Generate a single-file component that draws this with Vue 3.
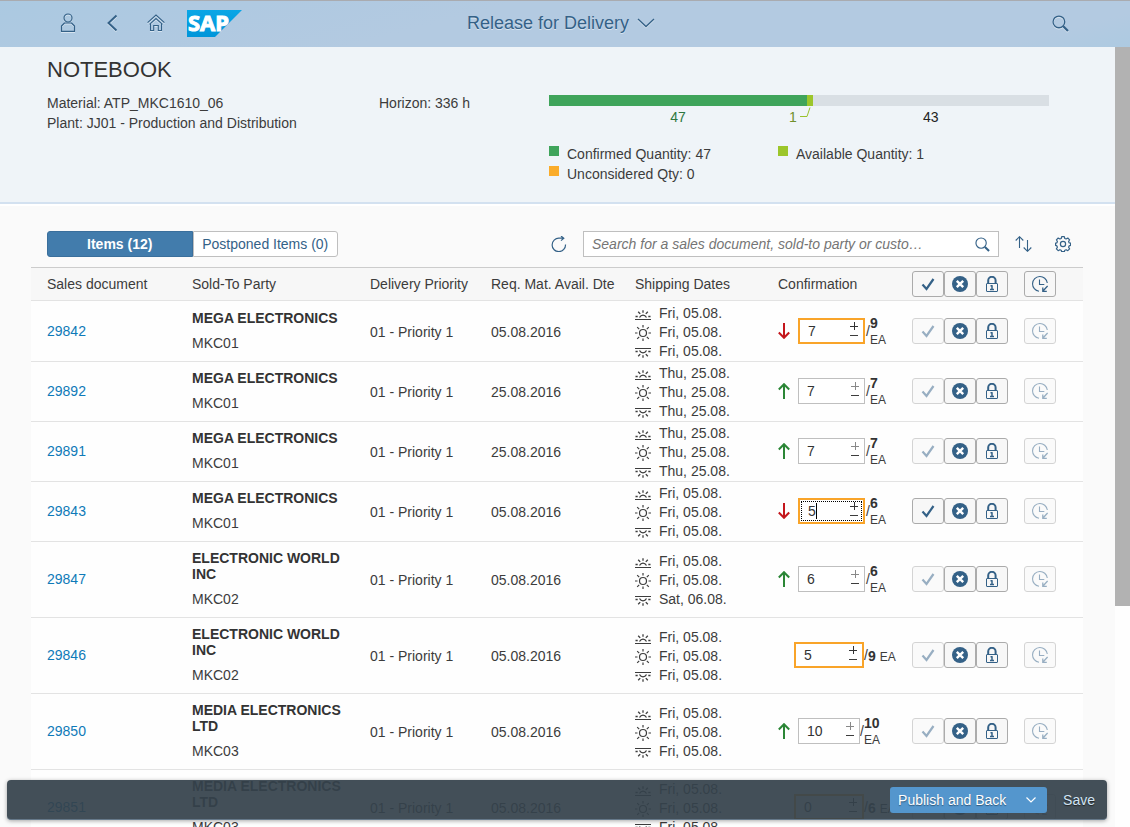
<script setup>
import { ref } from 'vue'

const query = ref('')
const tab = ref('items')

const segments = [
  { key: 'confirmed', value: 47 },
  { key: 'available', value: 1 },
  { key: 'open', value: 43 }
]

const legend = [
  { key: 'confirmed', label: 'Confirmed Quantity: 47' },
  { key: 'available', label: 'Available Quantity: 1' },
  { key: 'unconsidered', label: 'Unconsidered Qty: 0' }
]

const dateIcons = ['sunrise', 'sun', 'sunset']

const rows = ref([
  { doc: '29842', party: 'MEGA ELECTRONICS', code: 'MKC01', date: '05.08.2016', dates: ['Fri, 05.08.', 'Fri, 05.08.', 'Fri, 05.08.'], trend: 'down', qty: '7', total: '9', warn: true },
  { doc: '29892', party: 'MEGA ELECTRONICS', code: 'MKC01', date: '25.08.2016', dates: ['Thu, 25.08.', 'Thu, 25.08.', 'Thu, 25.08.'], trend: 'up', qty: '7', total: '7' },
  { doc: '29891', party: 'MEGA ELECTRONICS', code: 'MKC01', date: '25.08.2016', dates: ['Thu, 25.08.', 'Thu, 25.08.', 'Thu, 25.08.'], trend: 'up', qty: '7', total: '7' },
  { doc: '29843', party: 'MEGA ELECTRONICS', code: 'MKC01', date: '05.08.2016', dates: ['Fri, 05.08.', 'Fri, 05.08.', 'Fri, 05.08.'], trend: 'down', qty: '5', total: '6', warn: true, editing: true },
  { doc: '29847', party: 'ELECTRONIC WORLD INC', code: 'MKC02', date: '05.08.2016', dates: ['Fri, 05.08.', 'Fri, 05.08.', 'Sat, 06.08.'], trend: 'up', qty: '6', total: '6' },
  { doc: '29846', party: 'ELECTRONIC WORLD INC', code: 'MKC02', date: '05.08.2016', dates: ['Fri, 05.08.', 'Fri, 05.08.', 'Fri, 05.08.'], trend: '', qty: '5', total: '9', warn: true },
  { doc: '29850', party: 'MEDIA ELECTRONICS LTD', code: 'MKC03', date: '05.08.2016', dates: ['Fri, 05.08.', 'Fri, 05.08.', 'Fri, 05.08.'], trend: 'up', qty: '10', total: '10' },
  { doc: '29851', party: 'MEDIA ELECTRONICS LTD', code: 'MKC03', date: '05.08.2016', dates: ['Fri, 05.08.', 'Fri, 05.08.', 'Fri, 05.08.'], trend: '', qty: '0', total: '6', warn: true }
])

function step(row, delta) {
  row.qty = String(Math.max(0, Number(row.qty) + delta))
}
</script>

<template>
  <div class="app">
    <svg class="defs" aria-hidden="true">
      <defs>
        <linearGradient id="brand" x1="0" y1="0" x2="0" y2="1">
          <stop offset="0" stop-color="#0aa6e6" /><stop offset="1" stop-color="#0095d9" />
        </linearGradient>
        <symbol id="check" viewBox="0 0 16 16"><path d="M2.5 8.5 6.5 13 13.5 3" fill="none" stroke="currentColor" stroke-width="2.2" /></symbol>
        <symbol id="reject" viewBox="0 0 16 16"><circle cx="8" cy="8" r="8" fill="currentColor" /><path d="M4.8 4.8 11.2 11.2M11.2 4.8 4.8 11.2" stroke="#fff" stroke-width="2.4" /></symbol>
        <symbol id="lock" viewBox="0 0 16 16"><path d="M4.2 7.500V4.500a3.700 3.700 0 0 1 7.400 0V7.500" fill="none" stroke="currentColor" stroke-width="2" /><rect x="2.500" y="7.500" width="11" height="8" rx=".5" fill="none" stroke="currentColor" /><path d="M6.500 9.800h1.800M6 13.500h4M8 9.300v4.200" fill="none" stroke="currentColor" stroke-width="1.500" /></symbol>
        <symbol id="postpone" viewBox="0 0 16 16"><path d="M7 15.300A7.400 7.400 0 1 1 15.300 7M7.500 3.600V8.500h4.800" fill="none" stroke="currentColor" stroke-width="1.100" /><path d="M15.600 10 11 15M10.800 11.500v3.900h4" fill="none" stroke="currentColor" stroke-width="1.300" /></symbol>
        <symbol id="sunrise" viewBox="0 0 16 16"><path d="M0 13.500h16" stroke="currentColor" /><path d="M4.500 11.500c1-1.800 2.200-2.300 3.500-2.300s2.500.5 3.500 2.300M8 4.200v2.600M3.200 5.700 5.200 7.900M12.800 5.700 10.800 7.900M.5 10.500h2.200M13.300 10.500h2.200" fill="none" stroke="currentColor" stroke-width="1.300" /></symbol>
        <symbol id="sun" viewBox="0 0 16 16"><circle cx="8" cy="8" r="3.500" fill="none" stroke="currentColor" stroke-width="1.200" /><path d="M8 0v2.500M8 13.500V16M0 8h2.500M13.500 8H16M2.200 2.200 4.200 4.200M11.800 11.800l2 2M2.200 13.800l2-2M11.800 4.200l2-2" stroke="currentColor" stroke-width="1.200" /></symbol>
        <symbol id="sunset" viewBox="0 0 16 16"><path d="M0 4.500h16" stroke="currentColor" /><path d="M4.500 6.500c1 1.800 2.200 2.300 3.500 2.300s2.500-.5 3.500-2.300M8 11.200v2.600M3.200 12.300 5.200 10.100M12.800 12.300 10.800 10.100M.5 7.500h2.200M13.300 7.500h2.200" fill="none" stroke="currentColor" stroke-width="1.300" /></symbol>
        <symbol id="search" viewBox="0 0 16 16"><circle cx="6.500" cy="6.500" r="5.500" fill="none" stroke="currentColor" stroke-width="1.200" /><path d="M10.600 10.600 15 15" stroke="currentColor" stroke-width="2.100" /></symbol>
        <symbol id="down" viewBox="0 0 12 16"><path d="M6 0v14.500M.8 9.500 6 14.800 11.200 9.500" fill="none" stroke="currentColor" stroke-width="2" /></symbol>
        <symbol id="up" viewBox="0 0 12 16"><path d="M6 16V1.500M.8 6.500 6 1.200 11.200 6.500" fill="none" stroke="currentColor" stroke-width="2" /></symbol>
      </defs>
    </svg>

    <header class="shell">
      <div class="shell-left">
        <button class="shell-btn" aria-label="User">
          <svg width="16" height="20" viewBox="0 0 16 20" fill="none" stroke="currentColor" stroke-width="1.200"><circle cx="8" cy="5" r="4" /><path d="M4.500 10h7L14.500 13v5.400h-13V13z" stroke-linejoin="round" /></svg>
        </button>
        <button class="shell-btn" aria-label="Back">
          <svg width="12" height="18" viewBox="0 0 12 18" fill="none" stroke="currentColor" stroke-width="1.900"><path d="M10.500 1.500 2.500 9 10.500 16.500" /></svg>
        </button>
        <button class="shell-btn" aria-label="Home">
          <svg width="18" height="18" viewBox="0 0 18 18" fill="none" stroke="currentColor" stroke-width="1.100"><path d="M.6 8.700 9 1l8.400 7.700M2.600 10.400 9 4.500l6.400 5.900M3.500 10v6.500h3.200v-5h4.600v5h3.200V10" /></svg>
        </button>
        <svg class="brand" width="55" height="27" viewBox="0 0 55 27" role="img" aria-label="SAP">
          <path d="M0 0h55L28 27H0z" fill="url(#brand)" />
          <text x="1" y="21" class="brand-text">SAP</text>
        </svg>
      </div>
      <button class="app-title">
        <span>Release for Delivery</span>
        <svg width="18" height="10" viewBox="0 0 18 10" fill="none" stroke="currentColor" stroke-width="1.300"><path d="M1 1l8 7.500L17 1" /></svg>
      </button>
      <button class="shell-btn" aria-label="Search"><svg width="17" height="17"><use href="#search" /></svg></button>
    </header>

    <div class="viewport">
      <main class="page">
        <section class="object">
          <h1>NOTEBOOK</h1>
          <div class="facts">
            <div>
              <p>Material: ATP_MKC1610_06</p>
              <p>Plant: JJ01 - Production and Distribution</p>
            </div>
            <p>Horizon: 336 h</p>
            <div class="chart">
              <div class="bar">
                <span v-for="s in segments" :key="s.key" :class="s.key" :style="{ flexGrow: s.value }"></span>
              </div>
              <div class="bar-labels">
                <span v-for="s in segments" :key="s.key" :class="'t-' + s.key" :style="{ flexGrow: s.value }">
                  <span v-if="s.key === 'available'" class="callout">
                    {{ s.value }}
                    <svg width="11" height="12" viewBox="0 0 11 12" fill="none" stroke="#9ac22c"><path d="M0 9.500h7L10 .5" /></svg>
                  </span>
                  <template v-else>{{ s.value }}</template>
                </span>
              </div>
              <ul class="legend">
                <li v-for="l in legend" :key="l.key"><i :class="l.key"></i>{{ l.label }}</li>
              </ul>
            </div>
          </div>
        </section>

        <div class="toolbar">
          <div class="tabs">
            <button :class="{ on: tab === 'items' }" @click="tab = 'items'">Items (12)</button>
            <button :class="{ on: tab === 'postponed' }" @click="tab = 'postponed'">Postponed Items (0)</button>
          </div>
          <div class="tools">
            <button class="tool" aria-label="Refresh">
              <svg width="16" height="16" viewBox="0 0 16 16" fill="none" stroke="currentColor" stroke-width="1.200"><path d="M14.500 8.500A6.700 6.700 0 1 1 8 2.200h4.500M10 0l2.800 2.200L10 4.600" /></svg>
            </button>
            <div class="search">
              <input v-model="query" type="text" aria-label="Search items" placeholder="Search for a sales document, sold-to party or custo…" />
              <button aria-label="Start search"><svg width="15" height="15"><use href="#search" /></svg></button>
            </div>
            <button class="tool" aria-label="Sort">
              <svg width="17" height="16" viewBox="0 0 17 16" fill="none" stroke="currentColor" stroke-width="1.100"><path d="M4.500 12V.8M.7 4.500l3.800-3.800 3.800 3.800M12.500 4v11.200M8.700 11.500l3.800 3.800 3.800-3.800" /></svg>
            </button>
            <button class="tool" aria-label="Settings">
              <svg width="16" height="16" viewBox="0 0 16 16" fill="none" stroke="currentColor" stroke-width="1.200" stroke-linejoin="round"><circle cx="8" cy="8" r="2.600" /><path d="M6.700.6h2.600l.5 1.900 1.300.5 1.700-1 1.800 1.800-1 1.700.5 1.300 1.500.2v2.400l-1.500.5-.5 1.300 1 1.700-1.800 1.800-1.700-1-1.300.5-.5 1.500H6.700l-.5-1.500-1.300-.5-1.700 1-1.800-1.800 1-1.700-.5-1.300-1.300-.5V7l1.300-.2.500-1.300-1-1.700L3.200 2l1.700 1 1.300-.5z" /></svg>
            </button>
          </div>
        </div>

        <table>
          <colgroup><col class="c1" /><col class="c2" /><col class="c3" /><col class="c4" /><col class="c5" /><col class="c6" /><col class="c7" /></colgroup>
          <thead>
            <tr>
              <th>Sales document</th>
              <th>Sold-To Party</th>
              <th>Delivery Priority</th>
              <th>Req. Mat. Avail. Dte</th>
              <th>Shipping Dates</th>
              <th>Confirmation</th>
              <th>
                <div class="actions">
                  <button aria-label="Confirm all"><svg><use href="#check" /></svg></button>
                  <button aria-label="Reject all"><svg><use href="#reject" /></svg></button>
                  <button aria-label="Lock all"><svg><use href="#lock" /></svg></button>
                  <button class="later" aria-label="Postpone all"><svg><use href="#postpone" /></svg></button>
                </div>
              </th>
            </tr>
          </thead>
          <tbody>
            <tr v-for="row in rows" :key="row.doc">
              <td class="raised"><a href="#">{{ row.doc }}</a></td>
              <td><strong>{{ row.party }}</strong><span class="code">{{ row.code }}</span></td>
              <td>01 - Priority 1</td>
              <td>{{ row.date }}</td>
              <td class="dates">
                <div v-for="(d, i) in row.dates" :key="i"><svg width="16" height="16"><use :href="'#' + dateIcons[i]" /></svg>{{ d }}</div>
              </td>
              <td class="raised">
                <div class="confirm" :class="{ plain: !row.trend, wide: row.total.length > 1 }">
                  <svg v-if="row.trend" class="trend" :class="row.trend"><use :href="'#' + row.trend" /></svg>
                  <div class="stepper" :class="{ warn: row.warn, editing: row.editing }">
                    <input v-model="row.qty" type="text" :aria-label="'Confirmed quantity ' + row.doc" />
                    <span v-if="row.editing" class="caret"></span>
                    <span class="steps">
                      <button aria-label="Increase" class="plus" @click="step(row, 1)"><svg width="8" height="8" viewBox="0 0 8 8"><path d="M0 4.500h8M4.500 0v8" stroke="currentColor" /></svg></button>
                      <button aria-label="Decrease" @click="step(row, -1)"><svg width="8" height="3" viewBox="0 0 8 3"><path d="M0 1.500h8" stroke="currentColor" /></svg></button>
                    </span>
                  </div>
                  <span class="slash">/</span>
                  <span class="total"><b>{{ row.total }}</b><small>EA</small></span>
                </div>
              </td>
              <td class="raised">
                <div class="actions">
                  <button :disabled="!row.editing" aria-label="Confirm"><svg><use href="#check" /></svg></button>
                  <button aria-label="Reject"><svg><use href="#reject" /></svg></button>
                  <button aria-label="Lock"><svg><use href="#lock" /></svg></button>
                  <button class="later" disabled aria-label="Postpone"><svg><use href="#postpone" /></svg></button>
                </div>
              </td>
            </tr>
          </tbody>
        </table>
      </main>
      <div class="scrollbar"><div class="thumb"></div></div>
    </div>

    <footer class="footer">
      <button class="publish">
        Publish and Back
        <svg width="10" height="6" viewBox="0 0 10 6" fill="none" stroke="currentColor" stroke-width="1.200"><path d="M.5.5 5 5 9.500.5" /></svg>
      </button>
      <button class="save">Save</button>
    </footer>
  </div>
</template>

<style>
body { margin: 0; }
</style>

<style scoped>
.app {
  position: relative;
  height: 100vh;
  display: flex;
  flex-direction: column;
  overflow: hidden;
  background: #fefefe;
  color: #3c3c3c;
  font: 14px/20px "Liberation Sans", Arial, sans-serif;
}
.app * { box-sizing: border-box; }
.defs { position: absolute; width: 0; height: 0; }
button { font: inherit; color: inherit; padding: 0; margin: 0; border: 0; background: none; cursor: pointer; }
svg { display: block; flex: none; }
h1, p, ul { margin: 0; padding: 0; list-style: none; font-weight: normal; }

.shell {
  flex: none;
  height: 47px;
  display: grid;
  grid-template-columns: 1fr auto 1fr;
  align-items: center;
  padding: 0 48px 2px 46px;
  border-top: 1px solid #a9abb0;
  color: #346187;
  background: linear-gradient(165deg, #abc9e1 0, #afc9e1 20%, #b3cae1 40%, #b3cae1 90%, #adcae1 100%);
}
.shell-left { display: flex; align-items: center; }
.shell-btn { width: 44px; height: 44px; display: flex; align-items: center; justify-content: center; }
.shell-btn:last-child { justify-self: end; }
.shell-btn svg, .app-title svg { filter: drop-shadow(0 1px 0 rgba(255, 255, 255, .5)); }
.brand { margin-left: 9px; }
.brand-text { font: bold 22px "Noto Sans", "Open Sans", sans-serif; fill: #fff; stroke: #fff; stroke-width: 1px; }
.app-title { display: flex; align-items: center; gap: 8px; padding-right: 6px; font-size: 18px; text-shadow: 0 1px 0 rgba(255, 255, 255, .5); }

.viewport { flex: 1; min-height: 0; display: flex; }
.page { flex: 1; min-width: 0; background: #fafafa; overflow: hidden; }
.scrollbar { width: 15px; }
.thumb { height: 559px; background: #b2b2b2; }

.object { padding: 10px 66px 18px 47px; background: #eff4f8; border-bottom: 2px solid #d3e1f0; box-shadow: 0 2px 0 #fff; }
.object h1 { font-size: 22px; line-height: 26px; color: #333; margin-bottom: 10px; }
.facts { display: grid; grid-template-columns: 332fr 170fr 500fr; }
.chart { padding-top: 2px; }
.bar { display: flex; height: 11px; }
.bar span, .bar-labels > span { flex: 0 1 0; }
.bar-labels { display: flex; margin-top: 1px; }
.bar-labels > span { position: relative; text-align: center; color: #222; }
.confirmed { background: #3fa45b; }
.available { background: #9cc62b; }
.open { background: #d9dfe4; }
.unconsidered { background: #faac2b; }
.bar-labels .t-confirmed { color: #2d7740; }
.callout { position: absolute; right: 2px; top: 0; display: flex; gap: 3px; color: #71902a; }
.legend { display: grid; grid-template-columns: 229px 1fr; margin-top: 17px; }
.legend li { display: flex; gap: 8px; }
.legend i { width: 10px; height: 10px; margin-top: 2px; }

.toolbar { display: flex; justify-content: space-between; align-items: center; padding: 27px 36px 10px 47px; }
.tabs { display: flex; width: 291px; }
.tabs button { flex: 1; height: 26px; border: 1px solid #bfbfbf; border-radius: 0 3px 3px 0; background: #fff; color: #346187; white-space: nowrap; }
.tabs button:first-child { border-radius: 3px 0 0 3px; }
.tabs button.on { background: #427cac; border-color: #3a6f9c; color: #fff; font-weight: bold; }
.tools { display: flex; align-items: center; gap: 8px; }
.tool { width: 32px; height: 26px; display: flex; align-items: center; justify-content: center; color: #346187; }
.search { display: flex; width: 416px; height: 26px; border: 1px solid #bfbfbf; background: #fff; }
.search input { flex: 1; min-width: 0; border: 0; outline: 0; padding: 0 0 0 8px; background: none; font: inherit; }
.search input::placeholder { color: #757575; font-style: italic; opacity: 1; }
.search button { width: 32px; display: flex; align-items: center; justify-content: center; color: #346187; }

table { width: calc(100% - 63px); margin-left: 31px; table-layout: fixed; border-collapse: separate; border-spacing: 0; background: #fefefe; }
.c1 { width: 145px; } .c2 { width: 178px; } .c3 { width: 121px; } .c4 { width: 144px; } .c5 { width: 143px; } .c6 { width: 134px; } .c7 { width: 187px; }
th, td { padding: 0 0 0 16px; text-align: left; vertical-align: middle; font-weight: normal; }
th { height: 34px; border-top: 1px solid #cccccc; border-bottom: 1px solid #e3e3e3; background: #f7f7f7; white-space: nowrap; }
td { height: 60px; border-top: 1px solid #e3e3e3; }
tbody tr:first-child td { border-top-color: transparent; }
td:nth-child(2) { padding: 8px 10px 10px 16px; line-height: 16px; }
td strong { display: block; color: #333; }
.code { display: block; margin-top: 9px; }
a { color: #0f7ab8; text-decoration: none; }
td.raised { padding-bottom: 2px; }
td.dates { padding-top: 2px; line-height: 19px; }
.dates div { display: flex; align-items: center; gap: 8px; }

.confirm { display: flex; align-items: center; white-space: nowrap; }
.confirm.plain { padding-left: 16px; }
.trend { width: 12px; height: 16px; margin-right: 8px; }
.trend.down { color: #c4161c; }
.trend.up { color: #2b8636; }
.stepper { position: relative; display: flex; width: 67px; height: 26px; border: 1px solid #bfbfbf; background: #fff; }
.wide .stepper { width: 62px; }
.plain .stepper { width: 70px; }
.stepper.warn { border: 2px solid #f9a429; }
.stepper input { flex: 1; min-width: 0; width: 0; border: 0; outline: 0; padding: 0 0 0 8px; background: none; font: inherit; color: #333; }
.stepper.editing::after { content: ""; position: absolute; inset: 1px; border: 1px dotted #000; pointer-events: none; }
.caret { position: absolute; left: 16px; top: 3px; width: 1px; height: 16px; background: #000; }
.steps { display: flex; flex-direction: column; justify-content: center; gap: 4px; width: 13px; padding-bottom: 2px; }
.plus { color: #888; }
.warn .plus { color: #333; }
.slash { padding-left: 1px; }
.total b { display: block; line-height: 18px; color: #333; }
.total small { display: block; font-size: 12px; line-height: 16px; }
.wide .slash { padding: 0; }
.plain .total { display: flex; align-items: baseline; gap: 4px; padding-top: 2px; }
.plain .slash { padding: 0; }

.actions { display: flex; }
.actions button { width: 32px; height: 26px; display: flex; align-items: center; justify-content: center; border: 1px solid #ababab; border-radius: 3px; background: #f7f7f7; color: #346187; }
.actions svg { width: 16px; height: 16px; }
.actions .later { margin-left: 16px; }
.actions button:disabled { opacity: .5; cursor: default; }

.footer {
  position: absolute;
  left: 7px;
  right: 23px;
  bottom: 7px;
  height: 40px;
  display: flex;
  align-items: center;
  justify-content: flex-end;
  gap: 16px;
  padding-right: 12px;
  border-radius: 4px;
  border-bottom: 1px solid #66798a;
  background: rgba(53, 66, 75, .93);
  box-shadow: 0 1px 4px rgba(0, 0, 0, .35);
}
.publish { display: flex; align-items: center; justify-content: space-between; width: 157px; height: 26px; padding: 0 11px 0 8px; border-radius: 3px; background: #5496cd; color: #fff; text-shadow: 0 1px 1px #30597d; }
.save { color: #d1e4f5; text-shadow: 0 1px 1px #222; }
</style>
